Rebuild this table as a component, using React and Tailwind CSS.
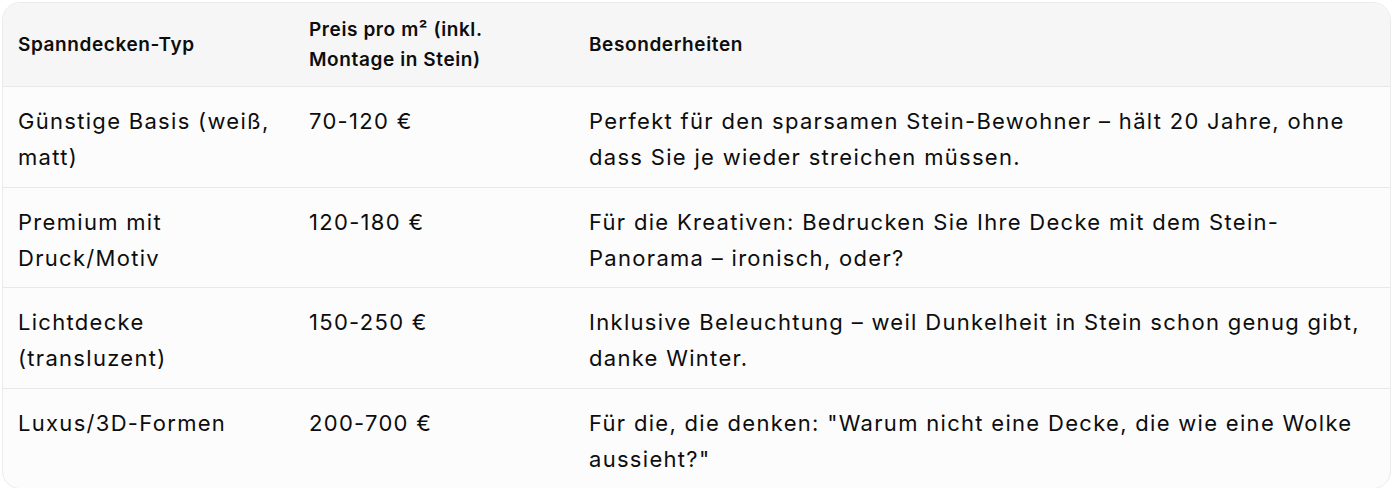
const ROWS = [
  { typ: 'Günstige Basis (weiß, matt)', preis: '70-120 €', info: 'Perfekt für den sparsamen Stein-Bewohner – hält 20 Jahre, ohne dass Sie je wieder streichen müssen.' },
  { typ: 'Premium mit Druck/Motiv', preis: '120-180 €', info: 'Für die Kreativen: Bedrucken Sie Ihre Decke mit dem Stein-Panorama – ironisch, oder?' },
  { typ: 'Lichtdecke (transluzent)', preis: '150-250 €', info: 'Inklusive Beleuchtung – weil Dunkelheit in Stein schon genug gibt, danke Winter.' },
  { typ: 'Luxus/3D-Formen', preis: '200-700 €', info: 'Für die, die denken: "Warum nicht eine Decke, die wie eine Wolke aussieht?"' },
]

export default function App() {
  return (
    <div className="w-[1393px] h-[488px] bg-white pt-[2px] px-[2px] overflow-hidden" style={{ fontFamily: 'Inter, "Noto Sans", sans-serif' }}>
      <div className="h-[487px] rounded-[18px] border border-[#ebebeb] bg-[#fcfcfc] overflow-hidden text-[#0d0d0d]">
        {/* header */}
        <div className="grid grid-cols-[302px_280px_1fr] h-[83px] items-center bg-[#f6f6f6] text-[19px] leading-[30px] font-semibold tracking-[0.6px]">
          <div className="pl-[15px] pr-4">Spanndecken-Typ</div>
          <div className="pl-[4px] w-[200px]">Preis pro m² (inkl. Montage in Stein)</div>
          <div className="pl-[4px] pr-4">Besonderheiten</div>
        </div>
        {ROWS.map((r) => (
          <div key={r.typ} className="grid grid-cols-[302px_280px_1fr] h-[100.5px] pt-[16px] border-t border-[#e8e8e8] text-[22px] leading-[36px] tracking-[1.3px]">
            <div className="pl-[15px] pr-[25px]">{r.typ}</div>
            <div className="pl-[4px] pr-4">{r.preis}</div>
            <div className="pl-[4px] pr-[15px]">{r.info}</div>
          </div>
        ))}
      </div>
    </div>
  )
}
